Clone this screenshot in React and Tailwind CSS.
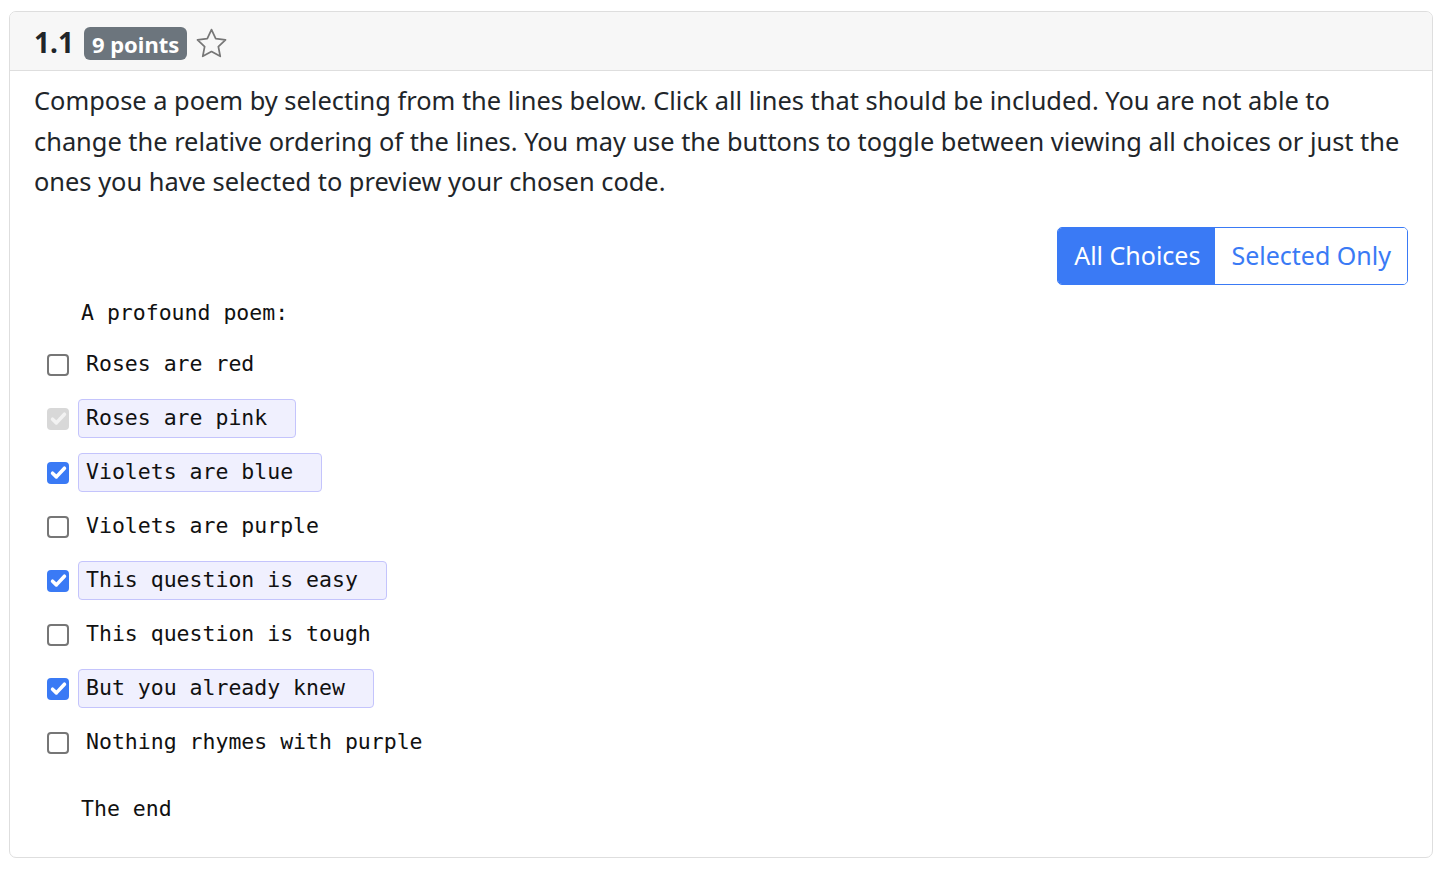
const lines = [
  { text: 'Roses are red', state: 'off' },
  { text: 'Roses are pink', state: 'disabled' },
  { text: 'Violets are blue', state: 'on' },
  { text: 'Violets are purple', state: 'off' },
  { text: 'This question is easy', state: 'on' },
  { text: 'This question is tough', state: 'off' },
  { text: 'But you already knew', state: 'on' },
  { text: 'Nothing rhymes with purple', state: 'off' },
];

const mono = "font-['DejaVu_Sans_Mono',monospace]";

const Check = ({ state }) => {
  if (state === 'off') {
    return <span className="w-[22px] h-[22px] rounded-[4px] border-2 border-[#767676] bg-white shrink-0" />;
  }
  const bg = state === 'on' ? 'bg-[#3a7af5]' : 'bg-[#d8d8d8]';
  return (
    <span className={`w-[22px] h-[22px] rounded-[4px] ${bg} shrink-0 flex items-center justify-center`}>
      <svg viewBox="0 0 16 16" className="w-[19px] h-[19px]" fill="none" stroke={state === 'on' ? '#fff' : '#f2f2f2'} strokeWidth={3} strokeLinecap="round" strokeLinejoin="round">
        <path d="M3 8.6l3.2 3.1L13 4.4" />
      </svg>
    </span>
  );
};

const App = () => {
  return (
    <div className="bg-white min-h-screen pt-[11px] pl-[9px] pr-[13px] font-['Noto_Sans',sans-serif] text-[#212529]">
      <div className="border border-[#dedede] rounded-[7px] overflow-hidden h-[847px]">
        {/* Header */}
        <div className="h-[59px] bg-[#f7f7f7] border-b border-[#dedede] flex items-center pl-[24px] pt-[5px] gap-[10px]">
          <span className="text-[28px] font-bold text-[#212529] leading-none -mt-[3px]">1.1</span>
          <span className="bg-[#6c757d] text-white text-[22px] font-bold rounded-[6px] px-[8px] h-[33px] flex items-center leading-none">9 points</span>
          <svg viewBox="0 0 24 24" className="w-[35px] h-[35px] -ml-[3px]" fill="none" stroke="#777" strokeWidth={1.2} strokeLinejoin="round">
            <path d="M12 2.5l2.9 6.2 6.7.8-4.9 4.6 1.3 6.7L12 17.5l-6 3.3 1.3-6.7-4.9-4.6 6.7-.8z" />
          </svg>
        </div>

        {/* Body */}
        <div className="px-[24px] pt-[9px]">
          <p className="text-[25.4px] leading-[40.5px] text-[#212529]">
            Compose a poem by selecting from the lines below. Click all lines that should be included. You are not able to change the relative ordering of the lines. You may use the buttons to toggle between viewing all choices or just the ones you have selected to preview your chosen code.
          </p>

          <div className="flex justify-end mt-[25px]">
            <div className="flex border border-[#3a7af5] rounded-[5px] overflow-hidden h-[58px]">
              <button className="bg-[#3a7af5] text-white text-[25px] pl-[16px] pr-[15px] whitespace-nowrap">All Choices</button>
              <button className="bg-white text-[#3a7af5] text-[25px] px-[16px] whitespace-nowrap">Selected Only</button>
            </div>
          </div>

          <div className={`${mono} text-[21.5px] text-[#111] mt-[4px]`}>
            <div className="h-[49px] flex items-center pl-[47px]">A profound poem:</div>
            {lines.map((l) => {
              const chosen = l.state !== 'off';
              return (
                <div key={l.text} className="h-[54px] flex items-center pl-[13px] gap-[9px]">
                  <Check state={l.state} />
                  <span
                    className={`h-[39px] flex items-center pl-[7px] pr-[28px] rounded-[4px] border ${
                      chosen ? 'bg-[#f0f0fe] border-[#c4c4fc]' : 'border-transparent'
                    }`}
                  >
                    {l.text}
                  </span>
                </div>
              );
            })}
            <div className="h-[68px] flex items-center pl-[47px] pt-[12px]">The end</div>
          </div>
        </div>
      </div>
    </div>
  );
};

export default App;
